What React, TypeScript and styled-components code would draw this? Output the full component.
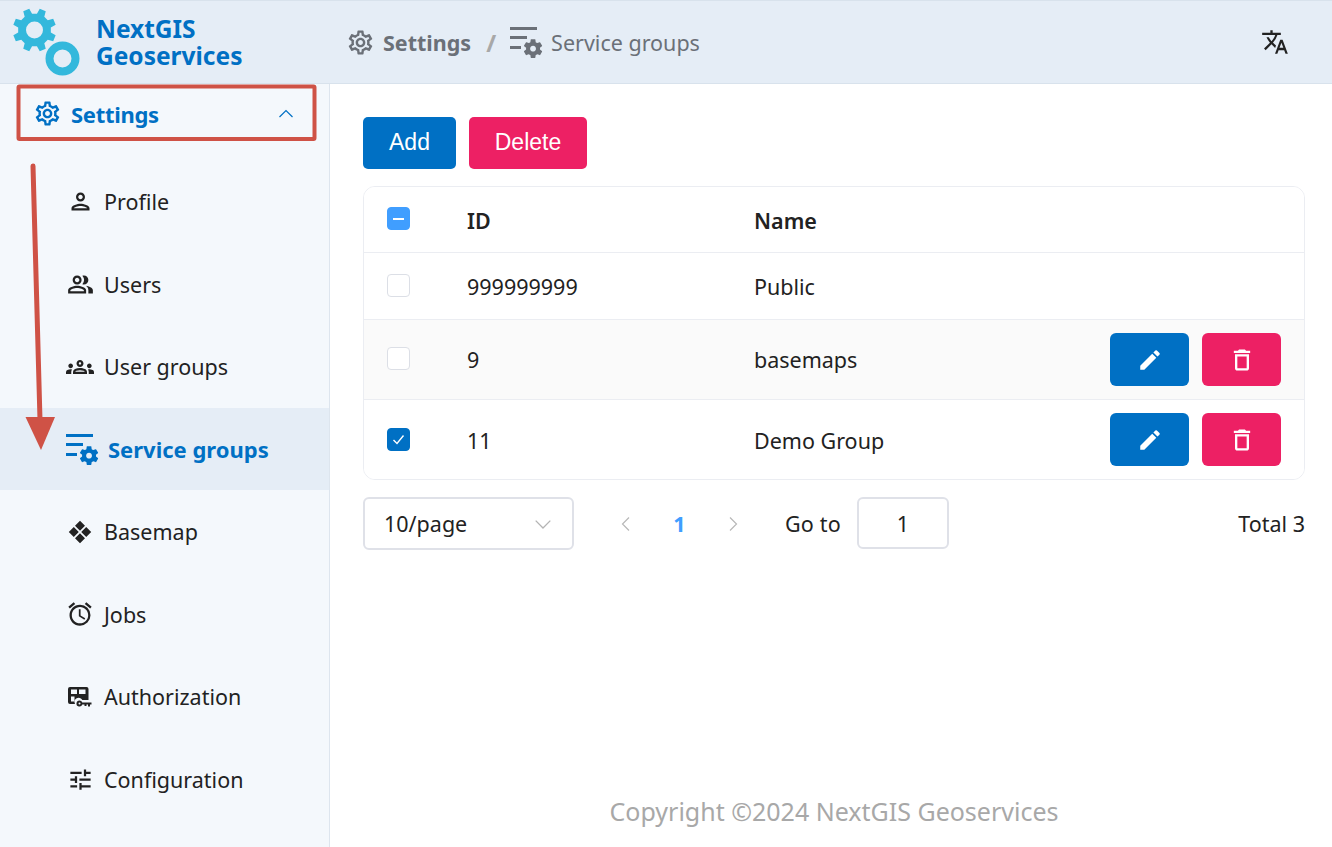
import { createGlobalStyle, styled } from "styled-components";
import {
  MdEdit,
  MdOutlineAccessAlarm,
  MdOutlineDelete,
  MdOutlineGroups,
  MdOutlinePeopleAlt,
  MdOutlinePerson,
  MdOutlineSettings,
  MdOutlineTune,
  MdTranslate,
} from "react-icons/md";
import { ReactNode } from "react";

const GlobalStyle = createGlobalStyle`
  * { box-sizing: border-box; }
  html, body { margin: 0; padding: 0; }
  body {
    font-family: "Noto Sans", "Open Sans", sans-serif;
    color: #222;
    background: #fff;
    overflow: hidden;
  }
`;

const Page = styled.div`
  position: relative;
  width: 1332px;
  height: 847px;
  display: flex;
  flex-direction: column;
  overflow: hidden;
`;

const Header = styled.header`
  height: 84px;
  flex: none;
  display: flex;
  align-items: center;
  background: #e5edf6;
  border-top: 1px solid #d8e2ec;
  border-bottom: 1px solid #d8e2ec;
`;

const Brand = styled.div`
  width: 346px;
  flex: none;
  display: flex;
  align-items: center;
  padding-left: 13px;
  gap: 15px;
`;

const BrandName = styled.div`
  color: #0070c4;
  font-size: 24.5px;
  font-weight: 700;
  line-height: 27px;
  margin-top: -1px;
`;

const Crumbs = styled.nav`
  flex: 1;
  display: flex;
  align-items: center;
  color: #6b7078;
  font-size: 21.5px;
`;

const CrumbStrong = styled.span`
  display: flex;
  align-items: center;
  gap: 8px;
  font-weight: 700;
`;

const CrumbSeparator = styled.span`
  margin: 0 13px 0 15px;
  color: #a8a8a8;
  font-size: 24px;
  font-weight: 700;
`;

const CrumbCurrent = styled.span`
  display: flex;
  align-items: center;
  gap: 8px;
`;

const LangButton = styled.div`
  display: flex;
  margin-right: 43px;
  color: #222;
`;

const Body = styled.div`
  flex: 1;
  display: flex;
  min-height: 0;
`;

const Sidebar = styled.aside`
  width: 330px;
  flex: none;
  background: #f4f8fc;
  border-right: 1px solid #dde5ee;
`;

const SubmenuTitle = styled.div`
  height: 76.5px;
  display: flex;
  align-items: center;
  padding: 0 35px 17px 33px;
  color: #0070c4;
  font-size: 22px;
  font-weight: 700;
  letter-spacing: -0.3px;
  gap: 9px;
`;

const SubmenuLabel = styled.span`
  flex: 1;
`;

const NavItem = styled.div<{ $active?: boolean }>`
  height: ${(p) => (p.$active ? "82px" : "82.5px")};
  margin-bottom: ${(p) => (p.$active ? "0.5px" : "0")};
  display: flex;
  align-items: center;
  padding-left: ${(p) => (p.$active ? "65px" : "66px")};
  gap: ${(p) => (p.$active ? "9px" : "10px")};
  font-size: ${(p) => (p.$active ? "22px" : "21.5px")};
  font-weight: ${(p) => (p.$active ? 700 : 400)};
  color: ${(p) => (p.$active ? "#0070c4" : "#222")};
  background: ${(p) => (p.$active ? "#e5edf6" : "transparent")};
`;

const NavIcon = styled.span<{ $wide?: boolean }>`
  width: ${(p) => (p.$wide ? "34px" : "28px")};
  display: flex;
  justify-content: center;
  align-items: center;
  flex: none;
`;

const Main = styled.main`
  flex: 1;
  display: flex;
  flex-direction: column;
  padding: 33px 27px 0 33px;
  min-width: 0;
`;

const Toolbar = styled.div`
  display: flex;
  gap: 13px;
  margin-bottom: 17px;
`;

const ActionButton = styled.button<{ $danger?: boolean; $wide?: boolean }>`
  height: 52px;
  width: ${(p) => (p.$wide ? "118px" : "93px")};
  border: 0;
  border-radius: 5px;
  color: #fff;
  background: ${(p) => (p.$danger ? "#ed2064" : "#0070c4")};
  font-family: "Liberation Sans", Arial, sans-serif;
  font-size: 23px;
  padding: 0 0 2px;
`;

const TableCard = styled.div`
  border: 1px solid #ebedf2;
  border-radius: 12px;
  overflow: hidden;
`;

const Row = styled.div<{ $height: number; $striped?: boolean; $head?: boolean }>`
  height: ${(p) => p.$height}px;
  display: grid;
  grid-template-columns: 103px 287px 1fr auto;
  align-items: center;
  background: ${(p) => (p.$striped ? "#fafafa" : "#fff")};
  border-bottom: 1px solid #ebedf2;
  font-size: 21.5px;
  font-weight: ${(p) => (p.$head ? 600 : 400)};
  padding-top: ${(p) => (p.$head ? "2px" : "0")};
  &:last-child {
    border-bottom: 0;
    padding-top: 2px;
  }
`;

const CheckCell = styled.div<{ $head?: boolean }>`
  padding-left: 23px;
  display: flex;
  margin-bottom: ${(p) => (p.$head ? "4px" : "2px")};
`;

const CheckBox = styled.span<{ $state?: "on" | "partial" }>`
  width: 23px;
  height: 23px;
  border-radius: 4px;
  display: flex;
  align-items: center;
  justify-content: center;
  border: 1px solid
    ${(p) =>
      p.$state === "on" ? "#0070c4" : p.$state === "partial" ? "#409eff" : "#dcdfe6"};
  background: ${(p) =>
    p.$state === "on" ? "#0070c4" : p.$state === "partial" ? "#409eff" : "#fff"};
`;

const PartialMark = styled.span`
  width: 11px;
  height: 2px;
  background: #fff;
`;

const RowActions = styled.div`
  display: flex;
  gap: 13px;
  padding-right: 23px;
  ${Row}:last-child & {
    margin-bottom: 2px;
  }
`;

const IconButton = styled.button<{ $danger?: boolean }>`
  width: 79px;
  height: 53px;
  border: 0;
  border-radius: 6px;
  padding: 0;
  display: flex;
  align-items: center;
  justify-content: center;
  color: #fff;
  background: ${(p) => (p.$danger ? "#ed2064" : "#0070c4")};
`;

const Pagination = styled.div`
  display: flex;
  align-items: center;
  margin-top: 17px;
  font-size: 21.5px;
`;

const PageSize = styled.div`
  width: 211px;
  height: 53px;
  border: 2px solid #dfe1e8;
  border-radius: 6px;
  display: flex;
  align-items: center;
  justify-content: space-between;
  padding: 0 20px 0 19px;
`;

const Pager = styled.div`
  display: flex;
  align-items: center;
  margin-left: 44px;
  width: 123px;
  justify-content: space-between;
`;

const CurrentPage = styled.span`
  color: #409eff;
  font-weight: 700;
`;

const GoTo = styled.div`
  display: flex;
  align-items: center;
  gap: 16px;
  margin-left: 44px;
  letter-spacing: 0.2px;
`;

const GoToInput = styled.div`
  width: 92px;
  height: 52px;
  margin-top: -1px;
  border: 2px solid #dfe1e8;
  border-radius: 6px;
  display: flex;
  align-items: center;
  justify-content: center;
`;

const Total = styled.div`
  margin-left: auto;
`;

const Footer = styled.footer`
  margin-top: auto;
  height: 53px;
  text-align: center;
  color: #a8a8a8;
  font-size: 25px;
`;

const ArrowOverlay = styled.svg`
  position: absolute;
  left: 0;
  top: 0;
  pointer-events: none;
`;

const GEAR =
  "M19.14 12.94c.04-.3.06-.61.06-.94 0-.32-.02-.64-.07-.94l2.03-1.58c.18-.14.23-.41.12-.61l-1.92-3.32c-.12-.22-.37-.29-.59-.22l-2.39.96c-.5-.38-1.03-.7-1.62-.94l-.36-2.54c-.04-.24-.24-.41-.48-.41h-3.84c-.24 0-.43.17-.47.41l-.36 2.54c-.59.24-1.13.57-1.62.94l-2.39-.96c-.22-.08-.47 0-.59.22L2.74 8.87c-.12.21-.08.47.12.61l2.03 1.58c-.05.3-.09.63-.09.94s.02.64.07.94l-2.03 1.58c-.18.14-.23.41-.12.61l1.92 3.32c.12.22.37.29.59.22l2.39-.96c.5.38 1.03.7 1.62.94l.36 2.54c.05.24.24.41.48.41h3.84c.24 0 .44-.17.47-.41l.36-2.54c.59-.24 1.13-.56 1.62-.94l2.39.96c.22.08.47 0 .59-.22l1.92-3.32c.12-.22.07-.47-.12-.61l-2.01-1.58zM12 15c-1.65 0-3-1.35-3-3s1.35-3 3-3 3 1.35 3 3-1.35 3-3 3z";

// eight-tooth gear outline for the logo, hole punched with evenodd
function logoGearPath(cx: number, cy: number) {
  const pts: string[] = [];
  for (let i = 0; i < 8; i++) {
    const a = (i * Math.PI) / 4 + Math.PI / 8;
    const step = Math.PI / 8;
    const corners: [number, number][] = [
      [16.5, -step * 0.62],
      [21.8, -step * 0.38],
      [21.8, step * 0.38],
      [16.5, step * 0.62],
    ];
    corners.forEach(([r, d]) => {
      pts.push(`${(cx + r * Math.cos(a + d)).toFixed(2)} ${(cy + r * Math.sin(a + d)).toFixed(2)}`);
    });
  }
  const r = 8.5;
  return `M${pts.join("L")}ZM${cx - r} ${cy}a${r} ${r} 0 1 0 ${r * 2} 0a${r} ${r} 0 1 0 ${-r * 2} 0Z`;
}

function Logo() {
  return (
    <svg width="68" height="68" viewBox="13 8 68 68">
      <path d={logoGearPath(34.5, 30)} fill="#33b8dc" fillRule="evenodd" />
      <circle cx="62.5" cy="58.5" r="13" fill="none" stroke="#33b8dc" strokeWidth="8" />
    </svg>
  );
}

function ServiceGroupsIcon() {
  return (
    <svg width="34" height="34" viewBox="0 0 34 34" fill="currentColor">
      <rect x="1" y="2" width="27" height="3" />
      <rect x="1" y="11" width="17" height="3" />
      <rect x="1" y="21" width="11" height="3" />
      <path d={GEAR} transform="translate(12.4 12) scale(0.97)" fillRule="evenodd" />
    </svg>
  );
}

function BasemapIcon() {
  return (
    <svg width="24" height="24" viewBox="0 0 24 24" fill="currentColor">
      <path d="M12 .8l5 5-5 5-5-5zM5.8 7l5 5-5 5-5-5zM18.2 7l5 5-5 5-5-5zM12 13.2l5 5-5 5-5-5z" />
    </svg>
  );
}

function AuthorizationIcon() {
  return (
    <svg width="26" height="24" viewBox="0 0 26 24" fill="currentColor">
      <path
        fillRule="evenodd"
        d="M3 2h16.5a2 2 0 0 1 2 2v11h-6.200a4 4 0 0 0-7.300 4H3a2 2 0 0 1-2-2V4a2 2 0 0 1 2-2zM4 4.500v4.500h6V4.500zm8 0v4.500h6.500V4.500zM4 11.500v5h3.500v-5z"
      />
      <path
        fillRule="evenodd"
        d="M12.500 15.500a3 3 0 0 1 2.800 2h9.200v2h-1.500v2h-2v-2h-1.500v1.500h-2v-1.500h-2.200a3 3 0 1 1-2.800-4zm0 2a1 1 0 1 0 0 2 1 1 0 0 0 0-2z"
      />
    </svg>
  );
}

function Chevron({ dir, color, size }: { dir: "up" | "down" | "left" | "right"; color: string; size: number }) {
  const rotate = { up: 0, right: 90, down: 180, left: 270 }[dir];
  return (
    <svg width={size} height={size} viewBox="0 0 16 16" fill="none">
      <path d="M1.500 11L8 4.500L14.500 11" stroke={color} strokeWidth="1.200" transform={`rotate(${rotate} 8 8)`} />
    </svg>
  );
}

const menu: { label: string; icon: ReactNode; active?: boolean }[] = [
  { label: "Profile", icon: <MdOutlinePerson size={27} /> },
  { label: "Users", icon: <MdOutlinePeopleAlt size={27} /> },
  { label: "User groups", icon: <MdOutlineGroups size={30} /> },
  { label: "Service groups", icon: <ServiceGroupsIcon />, active: true },
  { label: "Basemap", icon: <BasemapIcon /> },
  { label: "Jobs", icon: <MdOutlineAccessAlarm size={28} /> },
  { label: "Authorization", icon: <AuthorizationIcon /> },
  { label: "Configuration", icon: <MdOutlineTune size={27} /> },
];

const rows = [
  { id: "999999999", name: "Public", height: 67 },
  { id: "9", name: "basemaps", height: 80, striped: true, actions: true },
  { id: "11", name: "Demo Group", height: 79, checked: true, actions: true },
];

export default function App() {
  return (
    <Page>
      <GlobalStyle />
      <Header>
        <Brand>
          <Logo />
          <BrandName>
            NextGIS
            <br />
            Geoservices
          </BrandName>
        </Brand>
        <Crumbs>
          <CrumbStrong>
            <MdOutlineSettings size={29} />
            Settings
          </CrumbStrong>
          <CrumbSeparator>/</CrumbSeparator>
          <CrumbCurrent>
            <ServiceGroupsIcon />
            Service groups
          </CrumbCurrent>
        </Crumbs>
        <LangButton>
          <MdTranslate size={28} />
        </LangButton>
      </Header>
      <Body>
        <Sidebar>
          <SubmenuTitle>
            <MdOutlineSettings size={29} />
            <SubmenuLabel>Settings</SubmenuLabel>
            <Chevron dir="up" color="#0070c4" size={16} />
          </SubmenuTitle>
          {menu.map((item) => (
            <NavItem key={item.label} $active={item.active}>
              <NavIcon $wide={item.active}>{item.icon}</NavIcon>
              {item.label}
            </NavItem>
          ))}
        </Sidebar>
        <Main>
          <Toolbar>
            <ActionButton>Add</ActionButton>
            <ActionButton $danger $wide>
              Delete
            </ActionButton>
          </Toolbar>
          <TableCard>
            <Row $height={66} $head>
              <CheckCell $head>
                <CheckBox $state="partial">
                  <PartialMark />
                </CheckBox>
              </CheckCell>
              <div>ID</div>
              <div>Name</div>
              <div />
            </Row>
            {rows.map((row) => (
              <Row key={row.id} $height={row.height} $striped={row.striped}>
                <CheckCell>
                  <CheckBox $state={row.checked ? "on" : undefined}>
                    {row.checked && (
                      <svg width="15" height="15" viewBox="0 0 15 15" fill="none">
                        <path d="M2.500 8L6 11.500L12.500 3.500" stroke="#fff" strokeWidth="1.400" />
                      </svg>
                    )}
                  </CheckBox>
                </CheckCell>
                <div>{row.id}</div>
                <div>{row.name}</div>
                {row.actions ? (
                  <RowActions>
                    <IconButton>
                      <MdEdit size={26} />
                    </IconButton>
                    <IconButton $danger>
                      <MdOutlineDelete size={28} />
                    </IconButton>
                  </RowActions>
                ) : (
                  <div />
                )}
              </Row>
            ))}
          </TableCard>
          <Pagination>
            <PageSize>
              10/page
              <Chevron dir="down" color="#b4b4b4" size={18} />
            </PageSize>
            <Pager>
              <Chevron dir="left" color="#b8b8b8" size={16} />
              <CurrentPage>1</CurrentPage>
              <Chevron dir="right" color="#b8b8b8" size={16} />
            </Pager>
            <GoTo>
              Go to
              <GoToInput>1</GoToInput>
            </GoTo>
            <Total>Total 3</Total>
          </Pagination>
          <Footer>Copyright ©2024 NextGIS Geoservices</Footer>
        </Main>
      </Body>
      <ArrowOverlay width="1332" height="847" viewBox="0 0 1332 847">
        <rect x="18.500" y="86.500" width="296" height="52.500" fill="none" stroke="#cf5246" strokeWidth="4" rx="1" />
        <path d="M33 166L40 420" stroke="#cf5246" strokeWidth="5" strokeLinecap="round" />
        <path d="M25.500 417L55 417L41 450Z" fill="#cf5246" />
      </ArrowOverlay>
    </Page>
  );
}
